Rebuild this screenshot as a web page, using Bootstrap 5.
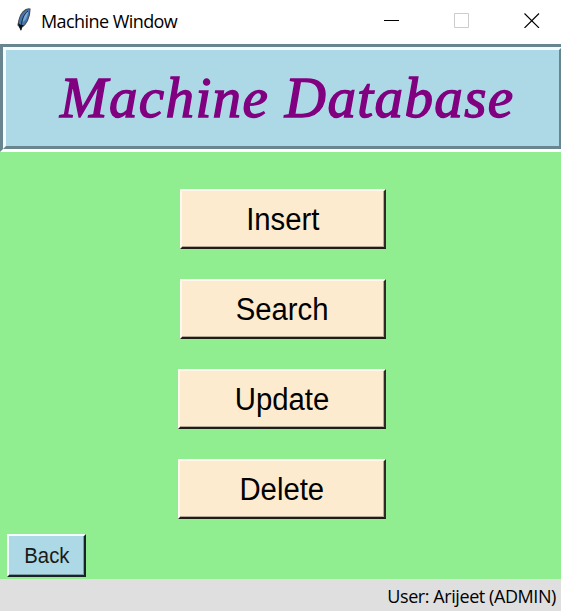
<!DOCTYPE html>
<html lang="en">
<head>
<meta charset="utf-8">
<meta name="viewport" content="width=device-width, initial-scale=1">
<title>Machine Window</title>
<link href="https://cdn.jsdelivr.net/npm/bootstrap@5.3.0/dist/css/bootstrap.min.css" rel="stylesheet">
<style>
body { height: 611px; background: #90ee90; color: #000; font-family: "Liberation Sans", Arial, sans-serif; }
.titlebar { height: 44px; background: #fff; font: 18px/44px "Open Sans", "Segoe UI", sans-serif; padding: 0 0 4px 16px; }
.win-name { letter-spacing: -.57px; margin-left: 9px; margin-top: 2px; }
.win-controls { margin-right: 21px; gap: 54px; }
.banner { width: 565px; height: 108px; border: 3px solid; border-color: #69858f #fff #fff #69858f; background: #add8e6; }
.banner-inner { height: 102px; border: 3px solid; border-color: #f4fcff #69858f #69858f #f4fcff; padding-left: 54px; }
.banner h1 { font: italic 400 57px/96px "Monotype Corsiva", "Liberation Serif", serif; color: #800080; white-space: nowrap; letter-spacing: 1.4px; -webkit-text-stroke: 1.4px #800080; }
.tk-btn { border: 2px solid; border-color: #fff8ee #302b26 #201c18 #fff8ee; border-radius: 0; background: #fdebd0; box-shadow: inset -1px -1px #b5a997; width: 206px; height: 60px; padding: 0 1px 0 0; font-size: 31px; line-height: 57px; color: #000; }
.tk-btn span { display: inline-block; transform: scaleX(.945); }
.tk-wide { width: 208px; }
.menu { width: 386px; padding-top: 37px; gap: 30px; height: 382px; }
.tk-back { width: 79px; height: 43px; margin-left: 7px; padding: 1px 0 0; background: #add8e6; border-color: #f4fcff #1b2225 #1b2225 #f4fcff; box-shadow: inset -1px -1px #7c9ba5; font-size: 21.5px; line-height: 39px; color: #1a1a1a; }
.statusbar { height: 32px; background: #dfdfdf; font: 18px/35px "Open Sans", "Segoe UI", sans-serif; letter-spacing: -.42px; padding-right: 5px; }
</style>
<script src="https://cdn.jsdelivr.net/npm/bootstrap@5.3.0/dist/js/bootstrap.bundle.min.js"></script>
</head>
<body class="d-flex flex-column overflow-hidden">
<header class="titlebar d-flex align-items-center flex-shrink-0">
  <svg width="16" height="24" viewBox="0 0 16 24" aria-hidden="true">
    <path d="M14 1 C9 0 4 6 3 12 L2 17 L5 20 C10 17 14 10 14 1Z" fill="#4678ad" stroke="#4b5056" stroke-width="1.2"/>
    <path d="M12 3 C9 5 7 9 7 14 C10 12 12 7 12 3Z" fill="#78aae0"/>
    <path d="M12 3 C8 6 5 12 5 22" fill="none" stroke="#1d2c3c" stroke-width="1"/>
    <path d="M2 15 L3 19 L5 23 L6 19 L8 17 L5 17Z" fill="#111"/>
  </svg>
  <span class="win-name">Machine Window</span>
  <div class="win-controls d-flex ms-auto">
    <svg width="16" height="16"><path d="M0 8.5H15" stroke="#000"/></svg>
    <svg width="16" height="16"><path d="M.5 1.5H14.5V15.5H.5Z" fill="none" stroke="#ccc"/></svg>
    <svg width="16" height="16"><path d="M.5 1.5L15 16M15 1.5L.5 16" stroke="#000" stroke-width="1.1"/></svg>
  </div>
</header>
<div class="banner flex-shrink-0"><div class="banner-inner"><h1 class="m-0">Machine Database</h1></div></div>
<main class="flex-shrink-0">
  <div class="menu d-flex flex-column align-items-end">
    <button class="btn tk-btn"><span>Insert</span></button>
    <button class="btn tk-btn"><span>Search</span></button>
    <button class="btn tk-btn tk-wide"><span>Update</span></button>
    <button class="btn tk-btn tk-wide"><span>Delete</span></button>
  </div>
  <button class="btn tk-btn tk-back d-block"><span>Back</span></button>
</main>
<footer class="statusbar mt-auto text-end flex-shrink-0"><span class="user-label">User: Arijeet (ADMIN)</span></footer>
</body>
</html>
